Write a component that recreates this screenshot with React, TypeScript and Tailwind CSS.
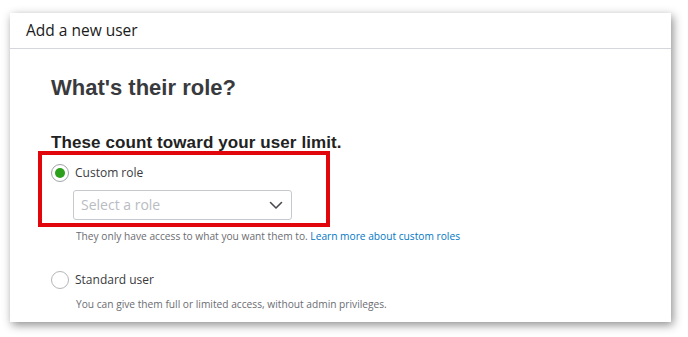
import React from "react";

export default function App() {
  return (
    <div className="w-[688px] h-[337px] bg-white overflow-hidden" style={{ fontFamily: "'Open Sans', sans-serif" }}>
      <div className="ml-[10px] mt-[13px] w-[661px] h-[309px] bg-white shadow-[2px_3px_9px_rgba(0,0,0,0.45)] flex flex-col">
        <div className="h-[36px] border-b border-[#d4d7dc] flex items-center pl-[16px] pt-[1px]">
          <span className="text-[15.5px] text-[#1a1a1a] leading-none">Add a new user</span>
        </div>
        <div className="pl-[41px] flex flex-col">
          <h1 className="mt-[28px] text-[22px] font-bold text-[#393a3d] leading-none" style={{ fontFamily: "'Liberation Sans', Arial, sans-serif" }}>
            What's their role?
          </h1>
          <h2 className="mt-[35px] text-[17px] font-bold text-[#222] leading-none tracking-[0.1px]" style={{ fontFamily: "'Liberation Sans', Arial, sans-serif" }}>
            These count toward your user limit.
          </h2>
          <div className="relative">
            <div className="absolute left-[-13px] top-[0px] w-[292px] h-[76px] border-[4px] border-[#e0060b] pointer-events-none" />
            <div className="flex items-center pt-[13px]">
              <div className="w-[18px] h-[18px] rounded-full border border-[#a0a4aa] flex items-center justify-center bg-white">
                <div className="w-[10px] h-[10px] rounded-full bg-[#2ca01c]" />
              </div>
              <span className="ml-[6px] text-[12px] text-[#393a3d] leading-none">Custom role</span>
            </div>
            <div className="ml-[22px] mt-[8px] w-[219px] h-[30px] border border-[#c6c9ce] rounded-[3px] flex items-center justify-between pl-[7px] pr-[8px]">
              <span className="text-[14px] text-[#b9bcc1] leading-none">Select a role</span>
              <svg width="14" height="9" viewBox="0 0 14 9" fill="none">
                <path d="M1.5 1.5 L7 7 L12.5 1.5" stroke="#4a4b50" strokeWidth="1.6" strokeLinecap="round" strokeLinejoin="round" />
              </svg>
            </div>
            <p className="ml-[2px] pl-[23px] mt-[11px] text-[10.2px] text-[#6b6c72] leading-none">
              They only have access to what you want them to. <span className="text-[#0077c5]">Learn more about custom roles</span>
            </p>
          </div>
          <div className="flex items-center mt-[30px]">
            <div className="w-[18px] h-[18px] rounded-full border border-[#b3b6bb] bg-white" />
            <span className="ml-[6px] text-[12px] text-[#393a3d] leading-none">Standard user</span>
          </div>
          <p className="ml-[25px] mt-[10px] text-[10.2px] text-[#6b6c72] leading-none">
            You can give them full or limited access, without admin privileges.
          </p>
        </div>
      </div>
    </div>
  );
}
